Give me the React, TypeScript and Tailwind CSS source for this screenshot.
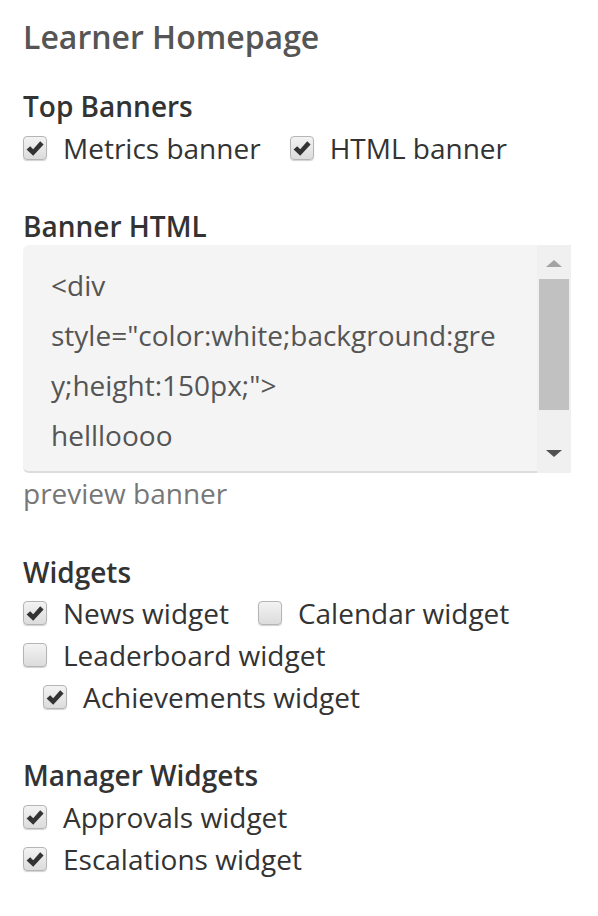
import React, { useState } from 'react';

const font = { fontFamily: '"Open Sans", "Noto Sans", sans-serif' };

function Box({ checked, onToggle }: { checked: boolean; onToggle: () => void }) {
  return (
    <button
      type="button"
      onClick={onToggle}
      className="w-[24px] h-[24px] shrink-0 rounded-[4px] border border-[#b5b5b5] bg-gradient-to-b from-[#f3f3f3] to-[#dcdcdc] shadow-[0_1px_1px_rgba(0,0,0,0.18)] flex items-center justify-center"
    >
      {checked && (
        <svg width="18" height="17" viewBox="0 0 18 17">
          <path d="M0.6 9.6 L4.2 6.2 L7.2 9.2 L14.2 1.2 L17.6 4.4 L7.2 15.8 Z" fill="#333" />
        </svg>
      )}
    </button>
  );
}

function Check({ label, initial, className = '' }: { label: string; initial: boolean; className?: string }) {
  const [on, setOn] = useState(initial);
  return (
    <label className={`flex items-center gap-4 h-[42px] text-[28px] text-[#333] ${className}`}>
      <Box checked={on} onToggle={() => setOn(!on)} />
      <span>{label}</span>
    </label>
  );
}

function Heading({ children, className = '' }: { children: React.ReactNode; className?: string }) {
  return <h3 className={`text-[28px] leading-[32px] font-semibold text-[#333] ${className}`}>{children}</h3>;
}

export default function App() {
  return (
    <div style={font} className="w-[598px] min-h-[916px] bg-white pl-[23px] pt-[17px]">
      <h2 className="text-[32px] leading-[40px] font-semibold text-[#555]">Learner Homepage</h2>

      <Heading className="mt-[33px]">Top Banners</Heading>
      <div className="flex gap-[29px] mt-[5px]">
        <Check label="Metrics banner" initial={true} />
        <Check label="HTML banner" initial={true} />
      </div>

      <Heading className="mt-[41px]">Banner HTML</Heading>
      <div className="mt-[3px] w-[548px] h-[228px] flex">
        <div className="flex-1 bg-[#f4f4f4] rounded-l-[6px] border-b-2 border-[#dcdcdc] pl-[28px] pt-[15px] overflow-hidden text-[28px] leading-[50px] text-[#555]">
          <div>&lt;div</div>
          <div>style="color:white;background:gre</div>
          <div>y;height:150px;"&gt;</div>
          <div>hellloooo</div>
        </div>
        <div className="w-[34px] bg-[#f0f0f0] flex flex-col items-center">
          <div className="h-[15px]" />
          <div className="w-0 h-0 border-l-[8px] border-r-[8px] border-b-[7px] border-l-transparent border-r-transparent border-b-[#a3a3a3]" />
          <div className="w-[30px] h-[131px] bg-[#c1c1c1] mt-[12px]" />
          <div className="flex-1" />
          <div className="w-0 h-0 border-l-[8px] border-r-[8px] border-t-[7px] border-l-transparent border-r-transparent border-t-[#505050] mb-[16px]" />
        </div>
      </div>
      <div className="mt-[2px] text-[28px] leading-[36px] text-[#777]">preview banner</div>

      <Heading className="mt-[45px]">Widgets</Heading>
      <div className="mt-[4px]">
        <div className="flex gap-[29px]">
          <Check label="News widget" initial={true} />
          <Check label="Calendar widget" initial={false} />
        </div>
        <Check label="Leaderboard widget" initial={false} />
        <Check label="Achievements widget" initial={true} className="ml-[20px]" />
      </div>

      <Heading className="mt-[41px]">Manager Widgets</Heading>
      <div className="mt-[5px]">
        <Check label="Approvals widget" initial={true} />
        <Check label="Escalations widget" initial={true} />
      </div>
    </div>
  );
}
